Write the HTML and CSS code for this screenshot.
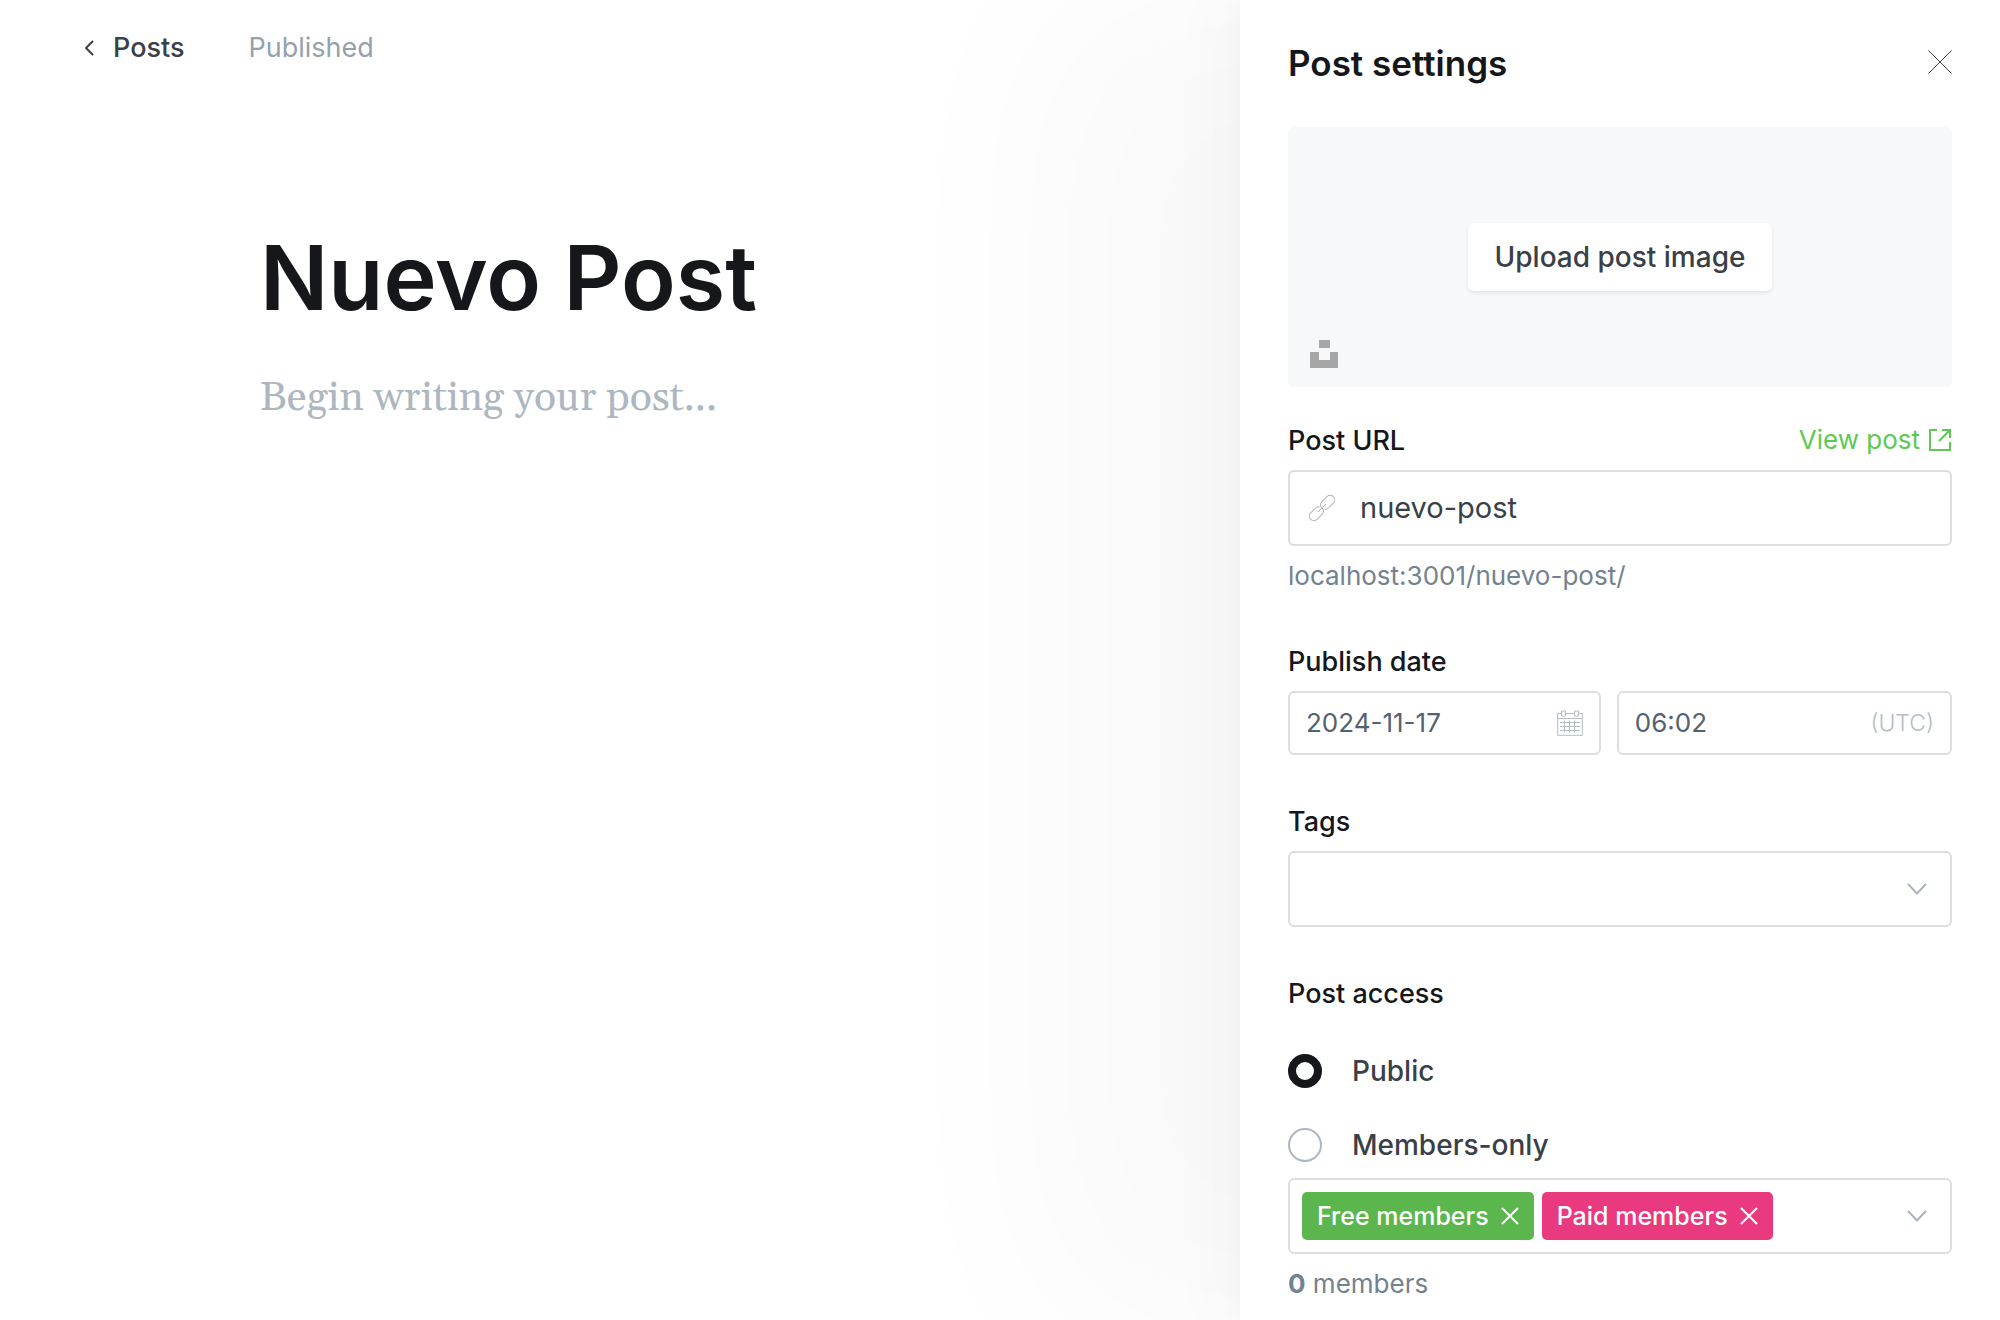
FILE: index.html
```html
<!DOCTYPE html>
<html lang="en">
<head>
<meta charset="utf-8">
<meta name="viewport" content="width=device-width, initial-scale=1">
<title>Nuevo Post</title>
<link rel="stylesheet" href="styles.css">
</head>
<body class="app">
<main class="editor">
  <header class="topbar">
    <a class="back" href="#posts">
      <svg class="back-icon" viewBox="0 0 10 16" aria-hidden="true"><path d="M8.5 1.5 2 8l6.500 6.500"/></svg>
      Posts
    </a>
    <span class="status">Published</span>
  </header>
  <input class="post-title" type="text" value="Nuevo Post" aria-label="Post title">
  <textarea class="post-body" placeholder="Begin writing your post..." aria-label="Post content" rows="1"></textarea>
</main>

<aside class="settings">
  <header class="settings-header">
    <h2 class="settings-title">Post settings</h2>
    <button class="close" type="button" aria-label="Close">
      <svg viewBox="0 0 24 24" aria-hidden="true"><path d="m.5.5 23 23M23.500.5l-23 23"/></svg>
    </button>
  </header>

  <form class="form">
    <div class="uploader">
      <button class="upload" type="button">Upload post image</button>
      <button class="unsplash" type="button" aria-label="Unsplash">
        <svg viewBox="0 0 28 28" aria-hidden="true"><path d="M9 0h11v8H9zM0 12h9v8h11v-8h8v16H0z"/></svg>
      </button>
    </div>

    <div class="group">
      <div class="label-row">
        <label class="label" for="url">Post URL</label>
        <a class="view-post" href="#view">View post
          <svg viewBox="0 0 24 24" aria-hidden="true"><path d="M9 2H2v20h20v-8M14 2h8v8M22 2 11 13"/></svg>
        </a>
      </div>
      <div class="field field-large">
        <svg class="link-icon" viewBox="0 0 28 28" aria-hidden="true"><g transform="rotate(-45 14 14)"><path d="M13 11.500a4 4 0 0 0-3.500-2h-7a4.500 4.500 0 0 0 0 9h7A4.500 4.500 0 0 0 14 14.500M15 16.500a4 4 0 0 0 3.500 2h7a4.500 4.500 0 0 0 0-9h-7a4.500 4.500 0 0 0-4.500 4M8.500 14h11"/></g></svg>
        <input class="input input-url" id="url" type="text" value="nuevo-post">
      </div>
      <p class="hint">localhost:3001/nuevo-post/</p>
    </div>

    <div class="group">
      <label class="label" for="date">Publish date</label>
      <div class="date-row">
        <div class="field">
          <input class="input" id="date" type="text" value="2024-11-17">
          <svg class="calendar-icon" viewBox="0 0 26 26" aria-hidden="true"><path d="M4.500 3.500H.7v21.800h24.600V3.500h-3.800M8.500 3.500h9M.7 8.500h24.600M4.500 1h4v5h-4zM17.500 1h4v5h-4zM3 12.500h20M3 16.500h20M3 20.500h20M7.500 10.500v12M12.500 10.500v12M17.500 10.500v12"/></svg>
        </div>
        <div class="field">
          <input class="input" type="text" value="06:02" aria-label="Publish time">
          <span class="timezone">(UTC)</span>
        </div>
      </div>
    </div>

    <div class="group">
      <label class="label" for="tags">Tags</label>
      <div class="field field-large">
        <input class="input" id="tags" type="text" role="combobox" aria-expanded="false">
        <svg class="chevron" viewBox="0 0 20 12" aria-hidden="true"><path d="m1 1 9 9.500L19 1"/></svg>
      </div>
    </div>

    <fieldset class="group access">
      <legend class="label">Post access</legend>
      <div class="options">
        <label class="option"><input class="radio" type="radio" name="access" checked>Public</label>
        <label class="option"><input class="radio" type="radio" name="access">Members-only</label>
      </div>
      <div class="field field-large tokens">
        <span class="token token-free">Free members
          <button class="remove" type="button" aria-label="Remove Free members"><svg viewBox="0 0 18 18" aria-hidden="true"><path d="m1 1 16 16M17 1 1 17"/></svg></button>
        </span>
        <span class="token token-paid">Paid members
          <button class="remove" type="button" aria-label="Remove Paid members"><svg viewBox="0 0 18 18" aria-hidden="true"><path d="m1 1 16 16M17 1 1 17"/></svg></button>
        </span>
        <input class="input" type="text" role="combobox" aria-expanded="false" aria-label="Member groups">
        <svg class="chevron" viewBox="0 0 20 12" aria-hidden="true"><path d="m1 1 9 9.500L19 1"/></svg>
      </div>
      <p class="hint"><strong>0</strong> members</p>
    </fieldset>
  </form>
</aside>
</body>
</html>
```
FILE: styles.css
```css
*,
*::before,
*::after {
  box-sizing: border-box;
}

.app {
  display: flex;
  min-height: 100vh;
  margin: 0;
  overflow-x: hidden;
  background: #fff;
  color: #15171a;
  font: 400 26px/32px Inter, "Liberation Sans", sans-serif;
}

svg {
  display: block;
  flex: none;
  overflow: visible;
  fill: none;
  stroke: currentColor;
}

button,
input,
textarea {
  margin: 0;
  padding: 0;
  border: 0;
  background: none;
  color: inherit;
  font: inherit;
  outline: none;
}

button {
  cursor: pointer;
}

a {
  text-decoration: none;
}

/* Editor */

.editor {
  display: flex;
  flex: 1;
  flex-direction: column;
  min-width: 0;
}

.topbar {
  display: flex;
  gap: 64px;
  padding: 32px 84px;
  font-size: 27px;
}

.back {
  display: flex;
  align-items: center;
  gap: 19px;
  color: #394047;
  font-weight: 500;
}

.back-icon {
  width: 10px;
  height: 16px;
  stroke-width: 2;
  stroke-linecap: round;
  stroke-linejoin: round;
}

.status {
  color: #95a1ad;
}

.post-title {
  margin: 126px 0 0 260px;
  height: 110px;
  font-size: 90px;
  font-weight: 600;
}

.post-body {
  flex: 1;
  margin: 36px 0 0 260px;
  color: #394047;
  font: 400 41px/60px Georgia, Gelasio, "Liberation Serif", serif;
  resize: none;
}

.post-body::placeholder {
  color: #aeb7c1;
  opacity: 1;
}

/* Settings panel */

.settings {
  position: relative;
  width: 38%;
  padding: 0 48px;
  background: #fff;
  box-shadow:
    -8px 0 14px rgba(0, 0, 0, 0.015),
    -40px 0 40px rgba(0, 0, 0, 0.015),
    -190px 0 200px rgba(0, 0, 0, 0.028);
}

.settings-header {
  display: flex;
  align-items: center;
  justify-content: space-between;
  padding: 42px 0;
}

.settings-title {
  margin: 0;
  font-size: 35px;
  font-weight: 600;
  line-height: 43px;
}

.close {
  padding-bottom: 4px;
  color: #394047;
}

.close svg {
  width: 24px;
  height: 24px;
}

.uploader {
  display: flex;
  position: relative;
  align-items: center;
  justify-content: center;
  height: 260px;
  margin-bottom: 37px;
  border-radius: 6px;
  background: #f6f8fa;
}

.upload {
  padding: 18px 27px;
  border-radius: 6px;
  background: #fff;
  box-shadow: 0 2px 4px rgba(0, 0, 0, 0.08);
  color: #394047;
  font-size: 28px;
  font-weight: 500;
  line-height: 32px;
}

.unsplash {
  position: absolute;
  bottom: 19px;
  left: 22px;
}

.unsplash svg {
  width: 28px;
  height: 28px;
  fill: #a6a6a6;
  stroke: none;
}

.group {
  margin-bottom: 50px;
}

.label-row {
  display: flex;
  justify-content: space-between;
}

.label {
  display: block;
  margin-bottom: 12px;
  font-size: 27px;
  font-weight: 500;
  line-height: 34px;
}

.view-post {
  display: flex;
  gap: 8px;
  align-items: center;
  height: 32px;
  color: #5dc952;
}

.view-post svg {
  width: 24px;
  height: 24px;
  stroke-width: 2;
}

.field {
  display: flex;
  align-items: center;
  min-width: 0;
  height: 64px;
  padding: 0 16px;
  border: 2px solid #dddedf;
  border-radius: 6px;
  color: #546170;
}

.field-large {
  height: 76px;
  padding: 0 23px 0 18px;
}

.input {
  flex: 1;
  min-width: 0;
}

.input-url {
  margin-left: 24px;
  color: #394047;
  font-size: 29px;
}

.link-icon {
  width: 28px;
  height: 28px;
  color: #b4b4b4;
}

.hint {
  margin: 11px 0 0;
  color: #738290;
  line-height: 38px;
}

.date-row {
  display: grid;
  grid-template-columns: 14fr 15fr;
  gap: 16px;
}

.calendar-icon {
  width: 26px;
  height: 26px;
  color: #b4bcc6;
}

.timezone {
  color: #b4bcc6;
  font-size: 23px;
  font-weight: 300;
}

.chevron {
  width: 20px;
  height: 12px;
  color: #abb4be;
  stroke-width: 2;
}

/* Post access */

.access {
  min-width: 0;
  margin: 0;
  padding: 0;
  border: 0;
}

.access > .label {
  margin: 0;
  padding: 0;
}

.options {
  display: flex;
  flex-direction: column;
  gap: 40px;
  padding: 43px 0 16px;
}

.option {
  display: flex;
  align-items: center;
  gap: 30px;
  height: 34px;
  color: #394047;
  font-size: 28px;
  font-weight: 500;
}

.radio {
  appearance: none;
  width: 34px;
  height: 34px;
  border: 2px solid #aeb7c1;
  border-radius: 50%;
}

.radio:checked {
  border: 8px solid #15171a;
}

.tokens {
  gap: 8px;
  padding-left: 12px;
}

.token {
  display: flex;
  align-items: center;
  gap: 12px;
  height: 48px;
  padding: 0 15px;
  border-radius: 5px;
  color: #fff;
  font-size: 25px;
  font-weight: 500;
}

.token-free {
  background: #5bb74d;
}

.token-paid {
  background: #e9397f;
}

.remove svg {
  width: 18px;
  height: 18px;
  stroke-width: 2;
}
```
